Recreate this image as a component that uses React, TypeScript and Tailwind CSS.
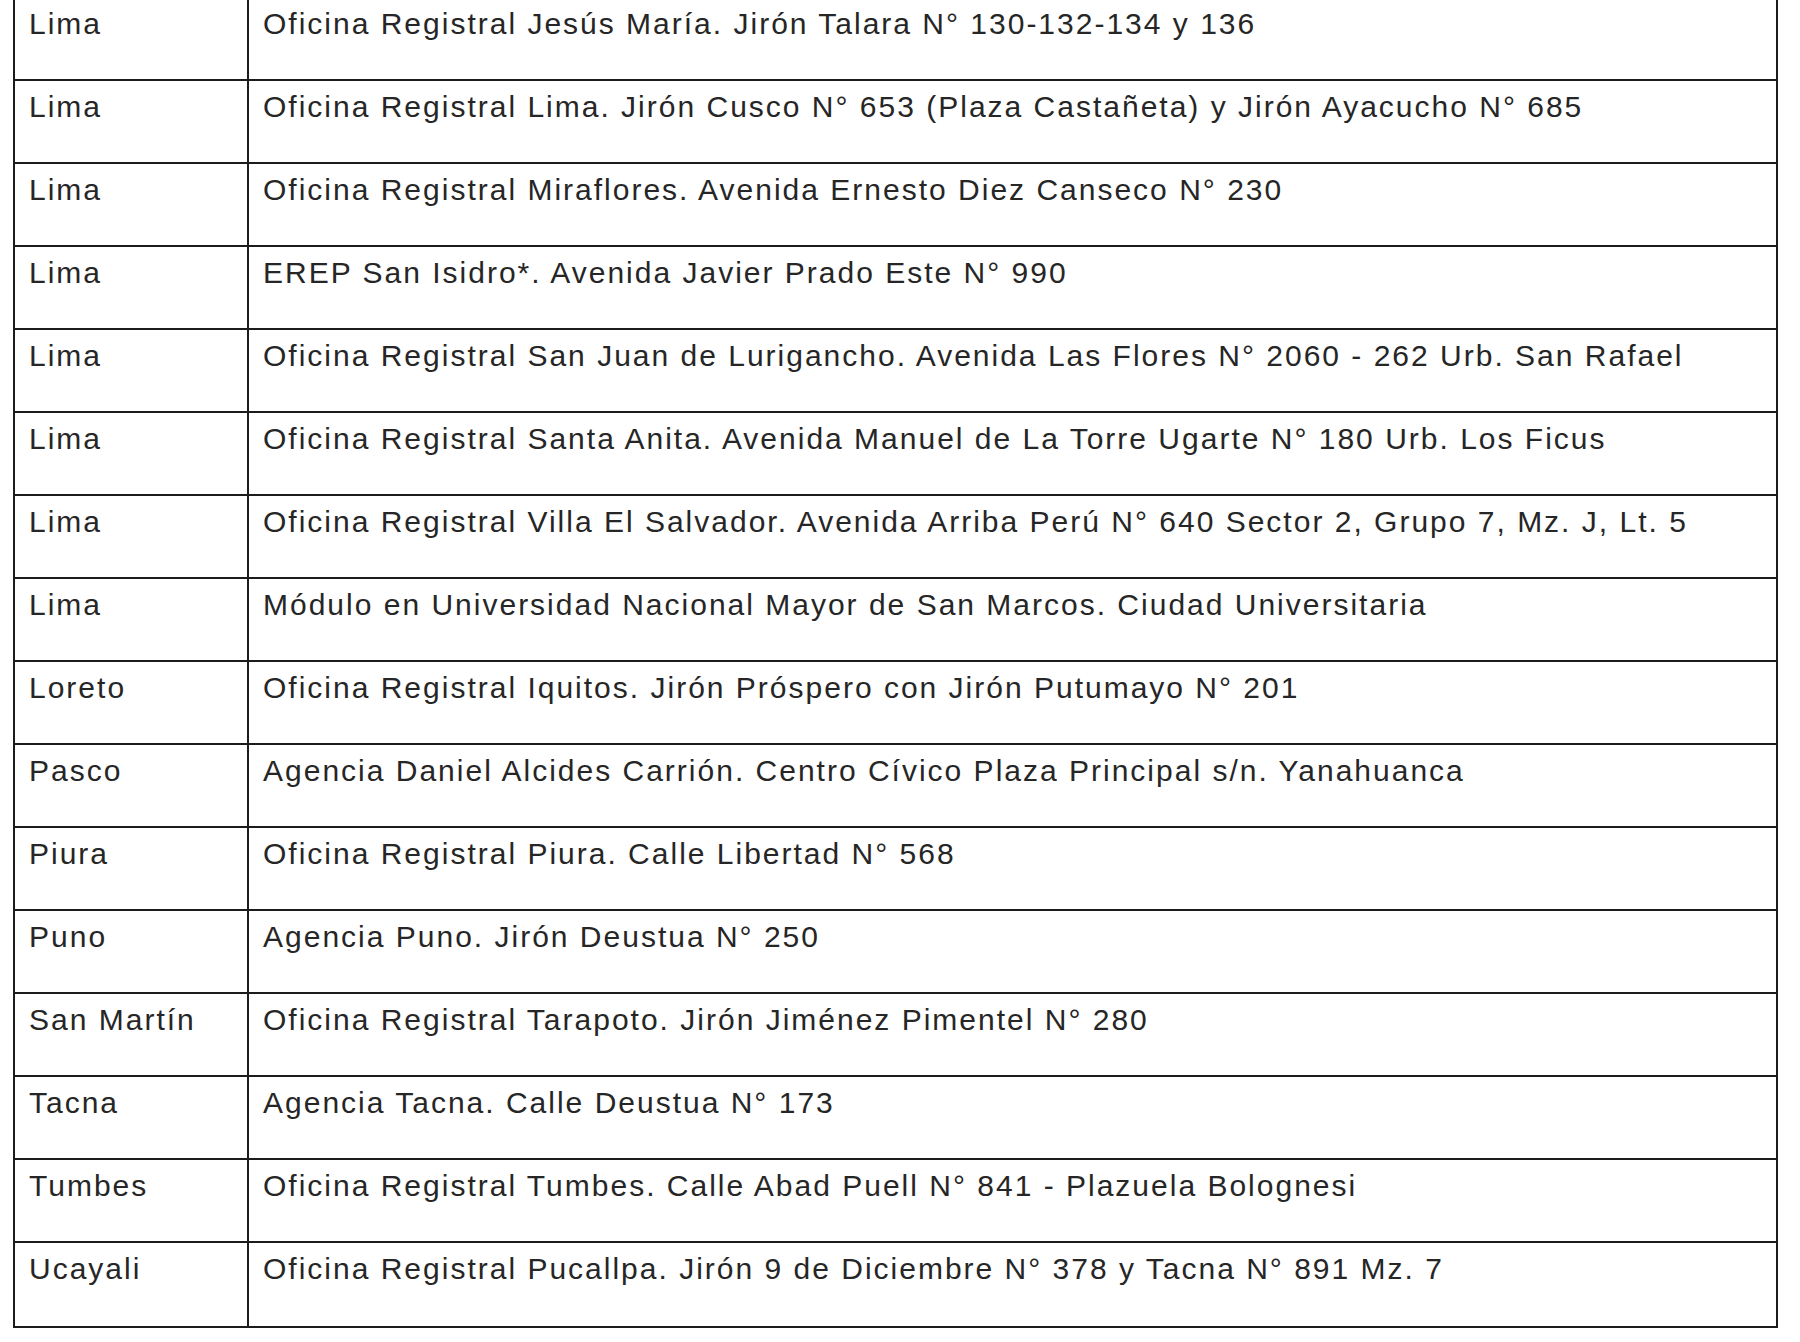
const rows: [string, string][] = [
  ["Lima", "Oficina Registral Jesús María. Jirón Talara N° 130-132-134 y 136"],
  ["Lima", "Oficina Registral Lima. Jirón Cusco N° 653 (Plaza Castañeta) y Jirón Ayacucho N° 685"],
  ["Lima", "Oficina Registral Miraflores. Avenida Ernesto Diez Canseco N° 230"],
  ["Lima", "EREP San Isidro*. Avenida Javier Prado Este N° 990"],
  ["Lima", "Oficina Registral San Juan de Lurigancho. Avenida Las Flores N° 2060 - 262 Urb. San Rafael"],
  ["Lima", "Oficina Registral Santa Anita. Avenida Manuel de La Torre Ugarte N° 180 Urb. Los Ficus"],
  ["Lima", "Oficina Registral Villa El Salvador. Avenida Arriba Perú N° 640 Sector 2, Grupo 7, Mz. J, Lt. 5"],
  ["Lima", "Módulo en Universidad Nacional Mayor de San Marcos. Ciudad Universitaria"],
  ["Loreto", "Oficina Registral Iquitos. Jirón Próspero con Jirón Putumayo N° 201"],
  ["Pasco", "Agencia Daniel Alcides Carrión. Centro Cívico Plaza Principal s/n. Yanahuanca"],
  ["Piura", "Oficina Registral Piura. Calle Libertad N° 568"],
  ["Puno", "Agencia Puno. Jirón Deustua N° 250"],
  ["San Martín", "Oficina Registral Tarapoto. Jirón Jiménez Pimentel N° 280"],
  ["Tacna", "Agencia Tacna. Calle Deustua N° 173"],
  ["Tumbes", "Oficina Registral Tumbes. Calle Abad Puell N° 841 - Plazuela Bolognesi"],
  ["Ucayali", "Oficina Registral Pucallpa. Jirón 9 de Diciembre N° 378 y Tacna N° 891 Mz. 7"],
];

export default function App() {
  return (
    <div className="min-h-[1342px] w-[1800px] overflow-hidden bg-white font-['Liberation_Sans',Arial,sans-serif] text-[#262626]">
      {/* Table, first row is cut by the top edge */}
      <div className="ml-[13px] mt-[-4px] w-[1765px] border-2 border-[#1c1c1c]">
        {rows.map(([region, office], i) => (
          <div
            key={i}
            className={`grid h-[83px] grid-cols-[234px_1fr] ${i < rows.length - 1 ? "border-b-2 border-[#1c1c1c]" : ""}`}
          >
            <div className="border-r-2 border-[#1c1c1c] pl-[14px] pt-[9px] text-[30px] leading-[33px] tracking-[2px]">
              {region}
            </div>
            <div className="pl-[14px] pt-[9px] text-[30px] leading-[33px] tracking-[2px] whitespace-nowrap">
              {office}
            </div>
          </div>
        ))}
      </div>
    </div>
  );
}
